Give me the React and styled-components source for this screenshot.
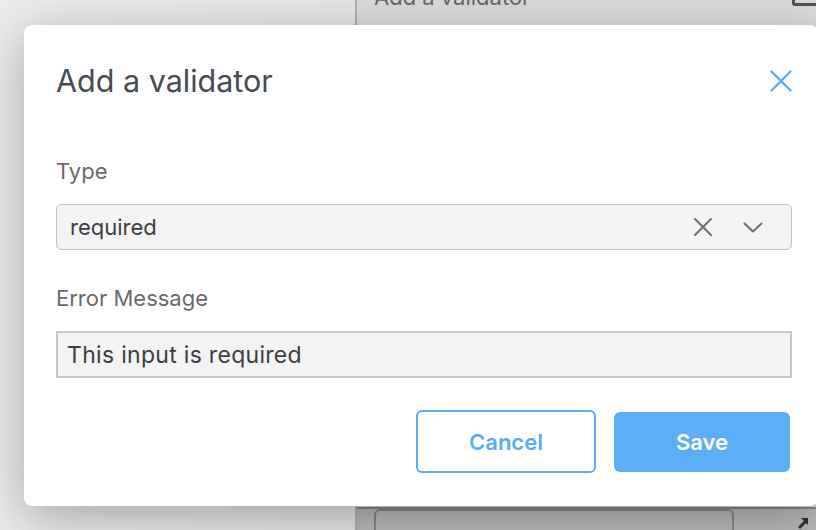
import React from "react";
import styled, { createGlobalStyle } from "styled-components";

const GlobalStyle = createGlobalStyle`
  html, body { margin: 0; padding: 0; }
  body { font-family: Inter, "Noto Sans", sans-serif; -webkit-font-smoothing: antialiased; }
  * { box-sizing: border-box; }
`;

const Page = styled.div`
  position: relative;
  width: 816px;
  height: 530px;
  overflow: hidden;
  display: flex;
`;

const Sidebar = styled.div`
  width: 357px;
  background: linear-gradient(90deg, #f6f6f6 0%, #f0f0f0 100%);
  border-right: 2px solid #b9b9b9;
`;

const Main = styled.div`
  flex: 1;
  display: flex;
  flex-direction: column;
  background: #e3e3e3;
`;

const MainHeader = styled.div`
  display: flex;
  justify-content: space-between;
  align-items: flex-end;
  margin-top: -17px;
  padding: 0 0 0 17px;
  height: 28px;
`;

const MainTitle = styled.span`
  font-size: 22px;
  line-height: 28px;
  color: #6d6d6d;
`;

const HeaderBox = styled.span`
  width: 28px;
  height: 30px;
  border: 3px solid #555;
  border-radius: 3px;
  margin-right: -4px;
  margin-bottom: 5px;
`;

const Spacer = styled.div`
  flex: 1;
`;

const MainFooter = styled.div`
  height: 23px;
  border-top: 2px solid #8e8e8e;
  background: #c2c2c2;
  display: flex;
  align-items: flex-end;
  justify-content: space-between;
  padding: 0 6px 0 17px;
`;

const FooterBox = styled.div`
  width: 360px;
  height: 21px;
  border: 2px solid #8e8e8e;
  border-bottom: none;
  border-radius: 6px 6px 0 0;
`;

const Overlay = styled.div`
  position: absolute;
  inset: 0;
  background: rgba(0, 0, 0, 0.04);
`;

const Modal = styled.div`
  position: absolute;
  left: 24px;
  top: 25px;
  width: 794px;
  height: 481px;
  background: #ffffff;
  border-radius: 8px;
  box-shadow: 0 12px 50px rgba(0, 0, 0, 0.3);
  padding: 38px 26px 0 32px;
  display: flex;
  flex-direction: column;
`;

const TitleRow = styled.div`
  display: flex;
  align-items: center;
  justify-content: space-between;
  height: 36px;
`;

const Title = styled.h2`
  margin: 0;
  font-size: 30.5px;
  line-height: 36px;
  font-weight: 400;
  color: #464c53;
`;

const CloseButton = styled.button`
  border: none;
  background: none;
  padding: 0;
  width: 22px;
  height: 22px;
  display: flex;
  align-items: center;
  justify-content: center;
  cursor: pointer;
`;

const Field = styled.div`
  display: flex;
  flex-direction: column;
  gap: 20px;
  margin-top: ${(p) => p.$top}px;
`;

const Label = styled.label`
  font-size: 22px;
  line-height: 26px;
  color: #6a6a6a;
`;

const Select = styled.div`
  height: 46px;
  border: 1.5px solid #c3c3c3;
  border-radius: 5px;
  background: #f4f4f4;
  display: flex;
  align-items: center;
  padding: 0 28px 0 13px;
`;

const SelectValue = styled.span`
  flex: 1;
  font-size: 22px;
  color: #3b3f44;
`;

const IconButton = styled.span`
  display: flex;
  align-items: center;
  justify-content: center;
  margin-left: ${(p) => p.$gap}px;
`;

const Input = styled.div`
  height: 47px;
  border: 2px solid #c9c9c9;
  background: #f3f3f3;
  display: flex;
  align-items: center;
  padding: 0 9px;
  font-size: 23px;
  letter-spacing: 0.3px;
  color: #3b3f44;
`;

const Actions = styled.div`
  display: flex;
  justify-content: flex-end;
  align-items: center;
  gap: 18px;
  margin-top: 32px;
  padding-right: 2px;
`;

const Button = styled.button`
  font-family: inherit;
  font-size: 22px;
  font-weight: 600;
  border-radius: 6px;
  cursor: pointer;
  width: ${(p) => (p.$primary ? "176px" : "180px")};
  height: ${(p) => (p.$primary ? "60px" : "63px")};
  border: ${(p) => (p.$primary ? "none" : "2px solid #5aacf6")};
  background: ${(p) => (p.$primary ? "#5caef7" : "#ffffff")};
  color: ${(p) => (p.$primary ? "#ffffff" : "#5aacf6")};
`;

export default function App() {
  return (
    <>
      <GlobalStyle />
      <Page>
        <Sidebar />
        <Main>
          <MainHeader>
            <MainTitle>Add a validator</MainTitle>
            <HeaderBox />
          </MainHeader>
          <Spacer />
          <MainFooter>
            <FooterBox />
            <svg width="14" height="14" viewBox="0 0 14 14">
              <path d="M3 12 L11 4" stroke="#333" strokeWidth="3" />
              <path d="M5 2 H12 V9 Z" fill="#333" />
            </svg>
          </MainFooter>
        </Main>
        <Overlay />
        <Modal>
          <TitleRow>
            <Title>Add a validator</Title>
            <CloseButton aria-label="Close">
              <svg width="22" height="22" viewBox="0 0 22 22">
                <path d="M1.5 1.5 L20.5 20.5 M20.5 1.5 L1.5 20.5" stroke="#5aacf6" strokeWidth="2.4" strokeLinecap="round" />
              </svg>
            </CloseButton>
          </TitleRow>
          <Field $top={59}>
            <Label>Type</Label>
            <Select>
              <SelectValue>required</SelectValue>
              <IconButton $gap={0}>
                <svg width="18" height="18" viewBox="0 0 18 18">
                  <path d="M1 1 L17 17 M17 1 L1 17" stroke="#6b7077" strokeWidth="2" strokeLinecap="round" />
                </svg>
              </IconButton>
              <IconButton $gap={31}>
                <svg width="20" height="11" viewBox="0 0 20 11">
                  <path d="M1.5 1.5 L10 9.5 L18.5 1.5" stroke="#6b7077" strokeWidth="2" fill="none" strokeLinecap="round" strokeLinejoin="round" />
                </svg>
              </IconButton>
            </Select>
          </Field>
          <Field $top={35}>
            <Label>Error Message</Label>
            <Input>This input is required</Input>
          </Field>
          <Actions>
            <Button>Cancel</Button>
            <Button $primary>Save</Button>
          </Actions>
        </Modal>
      </Page>
    </>
  );
}
